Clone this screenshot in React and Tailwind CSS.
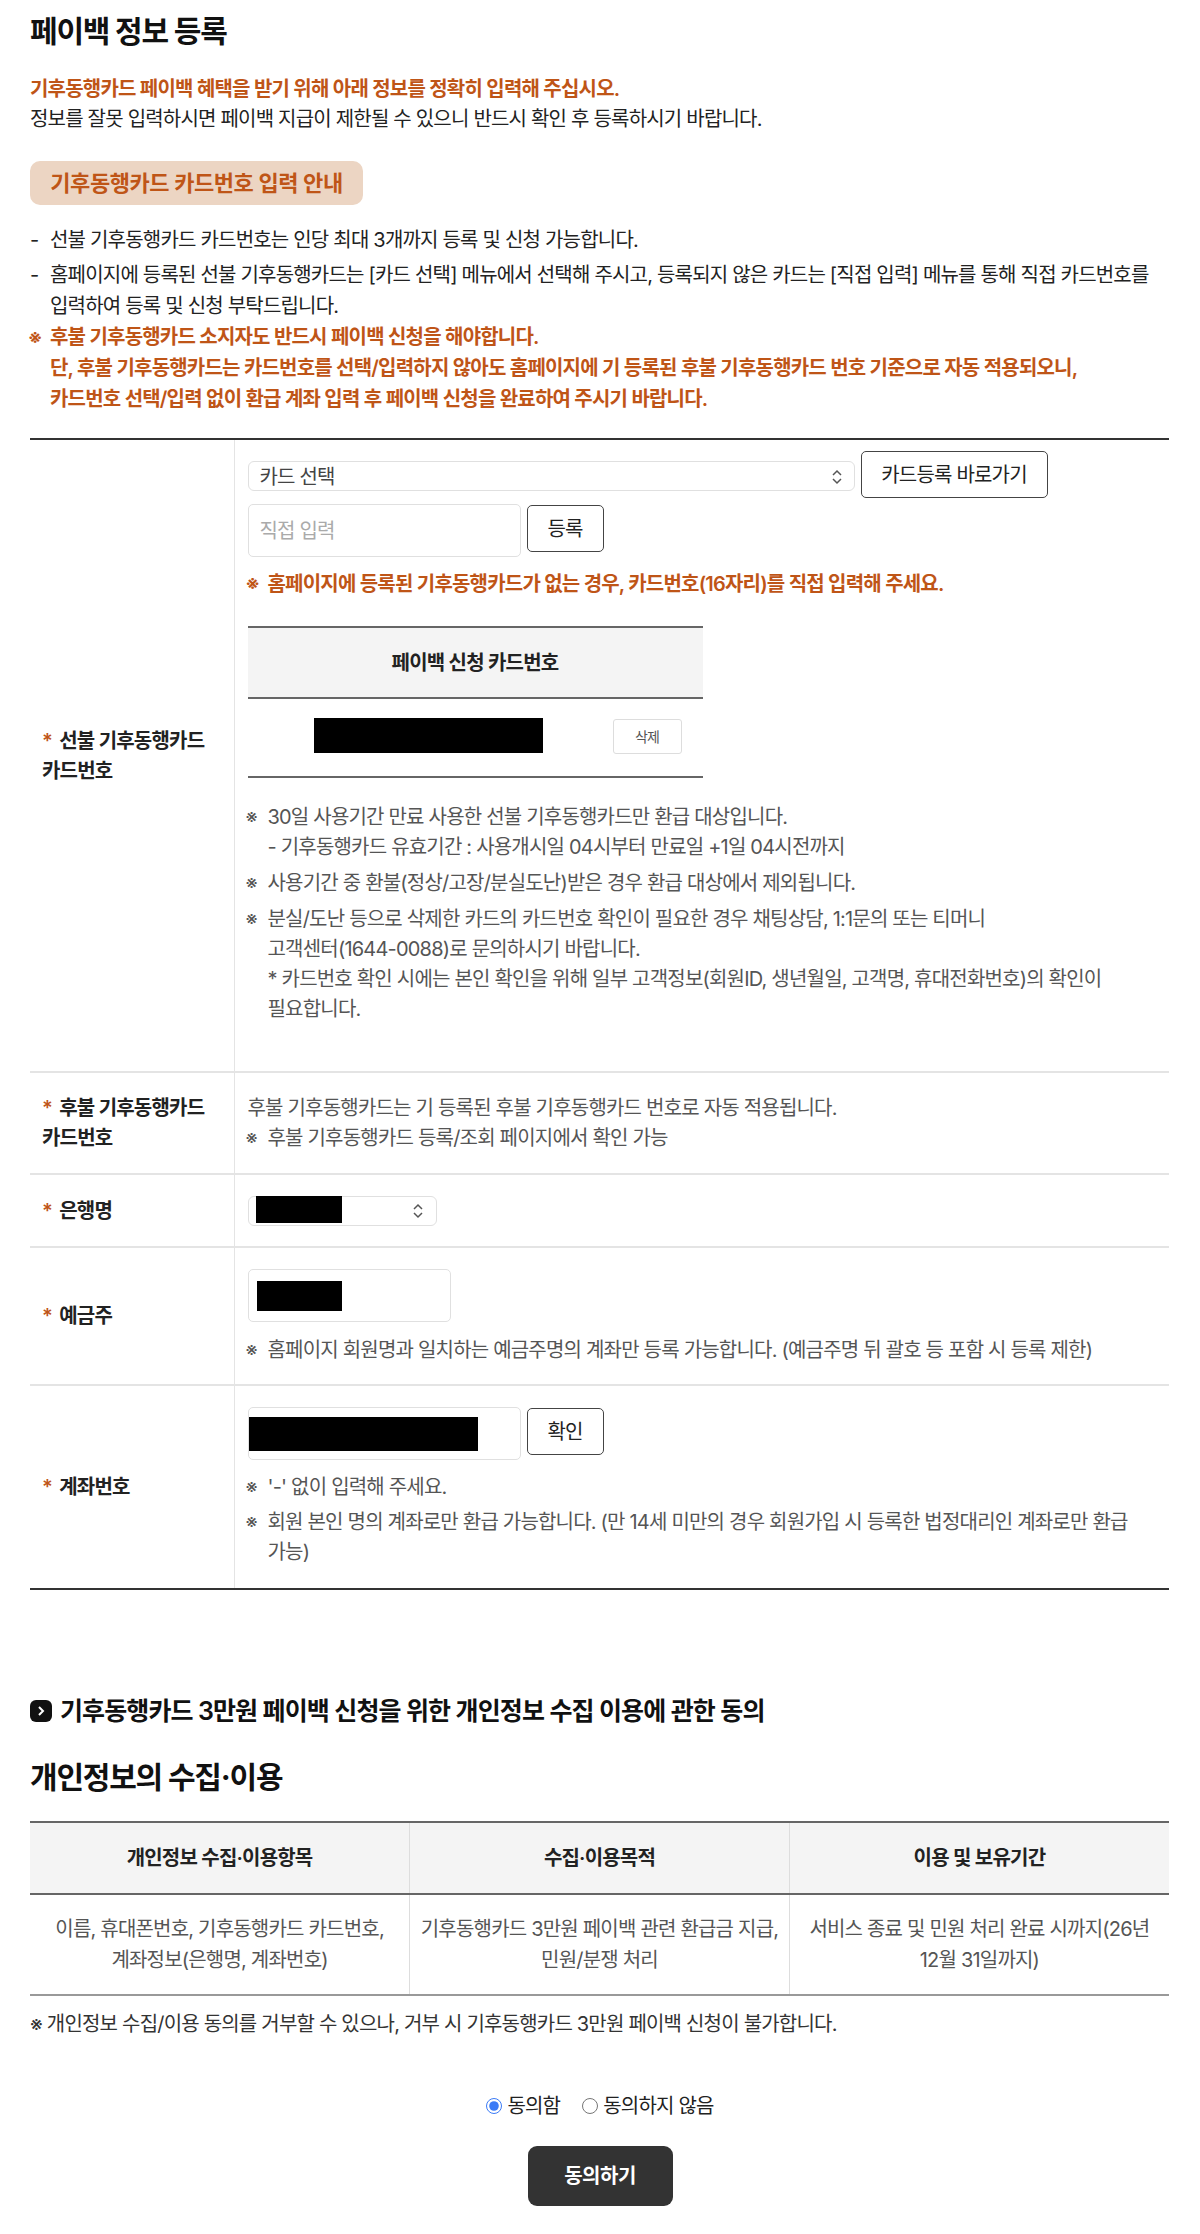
import React from "react";

const Note = ({ children, className = "" }) => (
  <div className={`flex ${className}`}>
    <span className="-ml-[2px] w-[22px] shrink-0 text-[19px]">※</span>
    <div>{children}</div>
  </div>
);

const Label = ({ children, second }) => (
  <th className="w-[204px] border-r border-[#e4e4e4] pl-[12px] pr-[20px] text-left align-middle text-[20px] leading-[30px] font-semibold tracking-[-0.8px] text-[#222]">
    <div>
      <span className="mr-[3px] text-[#bf5517]">* </span>
      {children}
    </div>
    {second && <div>{second}</div>}
  </th>
);

const Chevrons = () => (
  <svg className="absolute right-[12px] top-1/2 -translate-y-1/2" width="12" height="16" viewBox="0 0 12 16" fill="none" stroke="#555" strokeWidth="1.5">
    <path d="M2 6l4-4 4 4M2 10l4 4 4-4" />
  </svg>
);

const Redacted = ({ className }) => <div className={`bg-black ${className}`} />;

const OutlineButton = ({ children, className = "" }) => (
  <button className={`rounded-[5px] border border-[#444] bg-white text-[20px] tracking-[-0.8px] text-[#222] ${className}`}>
    {children}
  </button>
);

export default function App() {
  return (
    <div className="h-[2234px] break-keep bg-white px-[30px] font-['Inter','Noto_Sans_CJK_KR',sans-serif] text-[#222]">
      <h2 className="pt-[12px] text-[30px] leading-[38px] font-bold tracking-[-1.2px] text-[#111]">페이백 정보 등록</h2>

      <div className="mt-[24px] text-[20px] leading-[30px] tracking-[-0.8px]">
        <p className="font-semibold text-[#bf5517]">기후동행카드 페이백 혜택을 받기 위해 아래 정보를 정확히 입력해 주십시오.</p>
        <p>정보를 잘못 입력하시면 페이백 지급이 제한될 수 있으니 반드시 확인 후 등록하시기 바랍니다.</p>
      </div>

      <div className="mt-[27px] flex h-[44px] w-[333px] items-center justify-center rounded-[10px] bg-[#ecd5c3] text-[22px] font-semibold tracking-[-0.45px] text-[#bf5517]">
        기후동행카드 카드번호 입력 안내
      </div>

      <div className="mt-[20px] text-[20px] leading-[31px] tracking-[-0.8px]">
        <div className="flex">
          <span className="w-[20px] shrink-0">-</span>
          <p>선불 기후동행카드 카드번호는 인당 최대 3개까지 등록 및 신청 가능합니다.</p>
        </div>
        <div className="mt-[4px] flex">
          <span className="w-[20px] shrink-0">-</span>
          <p>홈페이지에 등록된 선불 기후동행카드는 [카드 선택] 메뉴에서 선택해 주시고, 등록되지 않은 카드는 [직접 입력] 메뉴를 통해 직접 카드번호를 입력하여 등록 및 신청 부탁드립니다.</p>
        </div>
        <div className="font-semibold text-[#bf5517]">
          <Note>
            <p>후불 기후동행카드 소지자도 반드시 페이백 신청을 해야합니다.</p>
            <p>단, 후불 기후동행카드는 카드번호를 선택/입력하지 않아도 홈페이지에 기 등록된 후불 기후동행카드 번호 기준으로 자동 적용되오니,</p>
            <p>카드번호 선택/입력 없이 환급 계좌 입력 후 페이백 신청을 완료하여 주시기 바랍니다.</p>
          </Note>
        </div>
      </div>

      <table className="mt-[23px] w-[1139px] table-fixed border-t-2 border-b-2 border-t-[#333] border-b-[#333] text-[20px] leading-[30px] tracking-[-0.8px] text-[#555]">
        <tbody>
          <tr className="h-[633px] border-b-2 border-[#e4e4e4]">
            <Label second="카드번호">선불 기후동행카드</Label>
            <td className="px-[13px] pt-[11px] align-top">
              <div className="flex items-start gap-[6px]">
                <div className="relative mt-[10px]">
                  <select className="h-[30px] w-[607px] appearance-none rounded-[6px] border border-[#e0e0e0] bg-white px-[11px] text-[20px] text-[#444]">
                    <option>카드 선택</option>
                  </select>
                  <Chevrons />
                </div>
                <OutlineButton className="h-[47px] w-[187px]">카드등록 바로가기</OutlineButton>
              </div>
              <div className="mt-[6px] flex items-start gap-[6px]">
                <input placeholder="직접 입력" className="h-[53px] w-[273px] rounded-[5px] border border-[#e0e0e0] px-[11px] text-[20px] placeholder:text-[#aaa]" />
                <OutlineButton className="mt-[1px] h-[47px] w-[77px]">등록</OutlineButton>
              </div>
              <Note className="mt-[12px] leading-[30px] font-semibold text-[#bf5517]">
                <p>홈페이지에 등록된 기후동행카드가 없는 경우, 카드번호(16자리)를 직접 입력해 주세요.</p>
              </Note>

              <div className="mt-[27px] w-[455px] border-t-2 border-b-2 border-[#666]">
                <div className="flex h-[71px] items-center justify-center border-b-2 border-[#666] bg-[#f4f4f4] font-semibold text-[#222]">
                  페이백 신청 카드번호
                </div>
                <div className="flex h-[77px] items-start pl-[66px] pt-[19px]">
                  <Redacted className="h-[35px] w-[229px]" />
                  <button className="mt-[1px] ml-[70px] h-[35px] w-[69px] rounded-[3px] border border-[#ddd] bg-white text-[14px] text-[#555]">삭제</button>
                </div>
              </div>

              <div className="mt-[24px]">
                <Note>
                  <p>30일 사용기간 만료 사용한 선불 기후동행카드만 환급 대상입니다.</p>
                  <p>- 기후동행카드 유효기간 : 사용개시일 04시부터 만료일 +1일 04시전까지</p>
                </Note>
                <Note className="mt-[6px]">
                  <p>사용기간 중 환불(정상/고장/분실도난)받은 경우 환급 대상에서 제외됩니다.</p>
                </Note>
                <Note className="mt-[6px]">
                  <p>분실/도난 등으로 삭제한 카드의 카드번호 확인이 필요한 경우 채팅상담, 1:1문의 또는 티머니<br />고객센터(1644-0088)로 문의하시기 바랍니다.</p>
                  <p>* 카드번호 확인 시에는 본인 확인을 위해 일부 고객정보(회원ID, 생년월일, 고객명, 휴대전화번호)의 확인이 필요합니다.</p>
                </Note>
              </div>
            </td>
          </tr>

          <tr className="h-[102px] border-b-2 border-[#e4e4e4]">
            <Label second="카드번호">후불 기후동행카드</Label>
            <td className="px-[13px] align-middle">
              <p>후불 기후동행카드는 기 등록된 후불 기후동행카드 번호로 자동 적용됩니다.</p>
              <Note>
                <p>후불 기후동행카드 등록/조회 페이지에서 확인 가능</p>
              </Note>
            </td>
          </tr>

          <tr className="h-[73px] border-b-2 border-[#e4e4e4]">
            <Label>은행명</Label>
            <td className="px-[13px] align-middle">
              <div className="relative flex h-[30px] w-[189px] items-start rounded-[6px] border border-[#e0e0e0] pl-[7px]">
                <Redacted className="-mt-[1px] h-[27px] w-[86px]" />
                <Chevrons />
              </div>
            </td>
          </tr>

          <tr className="h-[138px] border-b-2 border-[#e4e4e4]">
            <Label>예금주</Label>
            <td className="px-[13px] pt-[21px] align-top">
              <div className="flex h-[53px] w-[203px] items-center rounded-[5px] border border-[#e0e0e0] pl-[8px]">
                <Redacted className="h-[30px] w-[85px]" />
              </div>
              <Note className="mt-[13px]">
                <p>홈페이지 회원명과 일치하는 예금주명의 계좌만 등록 가능합니다. (예금주명 뒤 괄호 등 포함 시 등록 제한)</p>
              </Note>
            </td>
          </tr>

          <tr className="h-[204px]">
            <Label>계좌번호</Label>
            <td className="px-[13px] pt-[21px] align-top">
              <div className="flex items-start gap-[6px]">
                <div className="flex h-[53px] w-[273px] items-center rounded-[5px] border border-[#e0e0e0]">
                  <Redacted className="h-[34px] w-[229px]" />
                </div>
                <OutlineButton className="mt-[1px] h-[47px] w-[77px]">확인</OutlineButton>
              </div>
              <Note className="mt-[12px]">
                <p>'-' 없이 입력해 주세요.</p>
              </Note>
              <Note className="mt-[5px]">
                <p>회원 본인 명의 계좌로만 환급 가능합니다. (만 14세 미만의 경우 회원가입 시 등록한 법정대리인 계좌로만 환급 가능)</p>
              </Note>
            </td>
          </tr>
        </tbody>
      </table>

      <h3 className="mt-[105px] flex items-center gap-[8px] text-[25px] leading-[32px] font-semibold tracking-[-0.9px] text-[#111]">
        <svg width="22" height="22" viewBox="0 0 22 22">
          <rect width="22" height="22" rx="6" fill="#111" />
          <path d="M9 7l4 4-4 4" fill="none" stroke="#fff" strokeWidth="2" />
        </svg>
        기후동행카드 3만원 페이백 신청을 위한 개인정보 수집 이용에 관한 동의
      </h3>

      <h2 className="mt-[30px] text-[30px] leading-[40px] font-bold tracking-[-1.2px] text-[#111]">개인정보의 수집·이용</h2>

      <table className="mt-[24px] w-[1139px] table-fixed border-t-2 border-b-2 border-t-[#666] border-b-[#999] text-center text-[20px] leading-[31px] tracking-[-0.8px]">
        <thead>
          <tr className="h-[72px] border-b-2 border-[#666] bg-[#f4f4f4] font-semibold text-[#222]">
            <th className="border-r border-[#ddd] font-semibold">개인정보 수집·이용항목</th>
            <th className="border-r border-[#ddd] font-semibold">수집·이용목적</th>
            <th className="font-semibold">이용 및 보유기간</th>
          </tr>
        </thead>
        <tbody>
          <tr className="h-[101px] text-[#555]">
            <td className="border-r border-[#ddd] px-[10px]">이름, 휴대폰번호, 기후동행카드 카드번호, 계좌정보(은행명, 계좌번호)</td>
            <td className="border-r border-[#ddd] px-[10px]">기후동행카드 3만원 페이백 관련 환급금 지급, 민원/분쟁 처리</td>
            <td className="px-[10px]">서비스 종료 및 민원 처리 완료 시까지(26년 12월 31일까지)</td>
          </tr>
        </tbody>
      </table>

      <p className="mt-[14px] text-[20px] leading-[28px] tracking-[-0.8px] text-[#333]">※ 개인정보 수집/이용 동의를 거부할 수 있으나, 거부 시 기후동행카드 3만원 페이백 신청이 불가합니다.</p>

      <div className="mt-[54px] flex items-center justify-center gap-[6px] text-[20px] leading-[28px] tracking-[-0.8px]">
        <label className="flex items-center gap-[5px]">
          <input type="radio" name="agree" defaultChecked className="h-[16px] w-[16px] accent-[#3b7bf6]" />
          동의함
        </label>
        <label className="ml-[16px] flex items-center gap-[5px]">
          <input type="radio" name="agree" className="h-[16px] w-[16px]" />
          동의하지 않음
        </label>
      </div>

      <div className="mt-[26px] flex justify-center">
        <button className="h-[60px] w-[145px] rounded-[9px] bg-[#333] text-[20px] font-semibold tracking-[-0.5px] text-white">동의하기</button>
      </div>
    </div>
  );
}
